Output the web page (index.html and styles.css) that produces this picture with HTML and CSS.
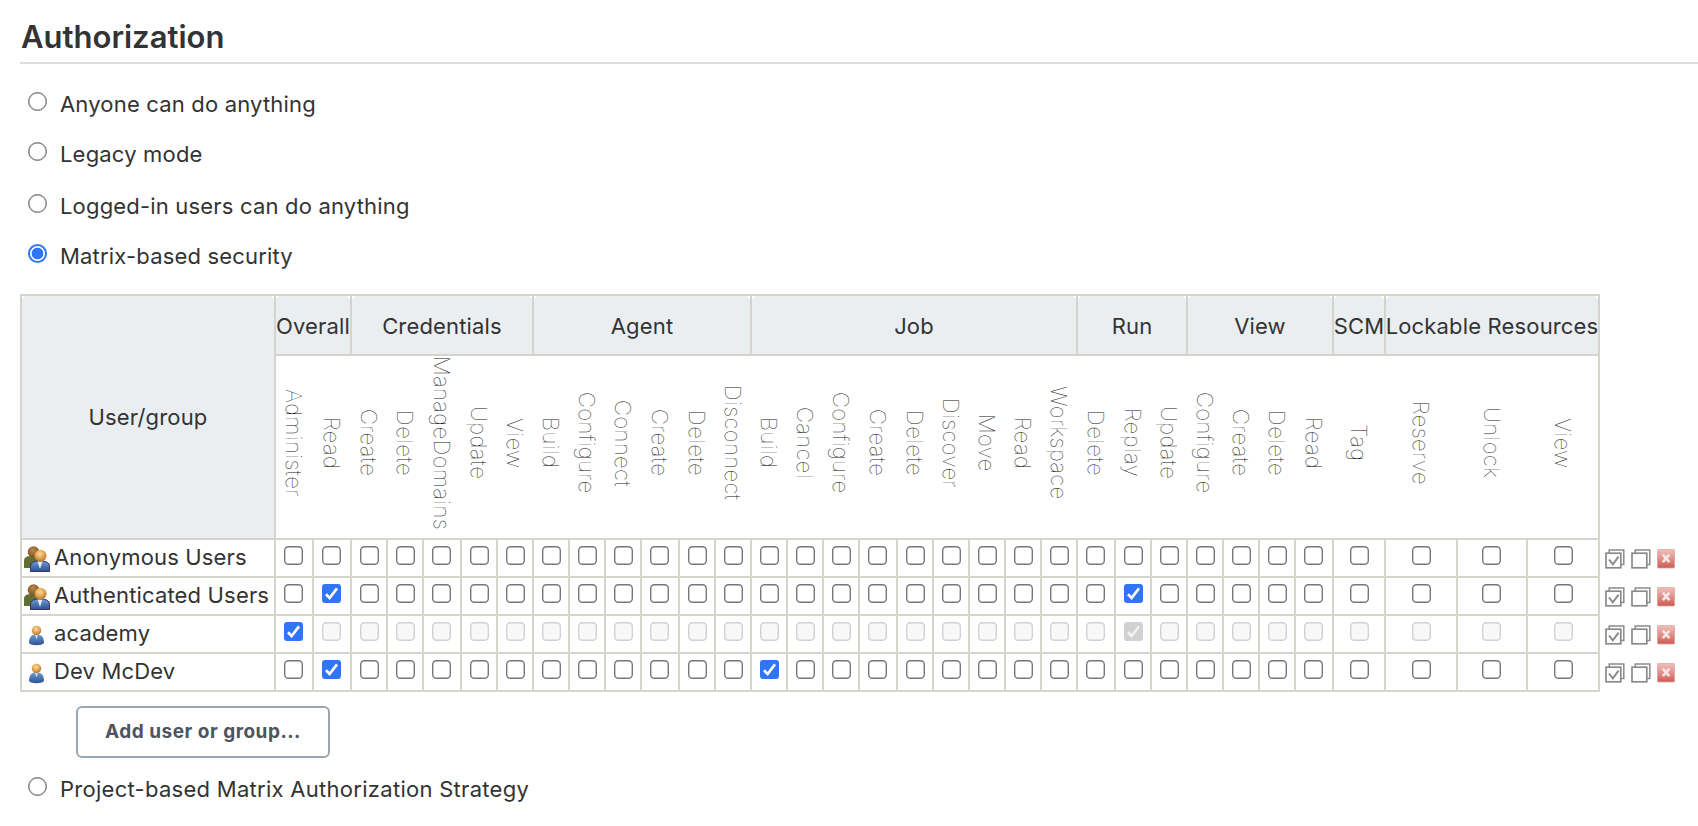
FILE: index.html
```html
<!DOCTYPE html>
<html lang="en">
<head>
<meta charset="utf-8">
<title>Authorization</title>
<link rel="stylesheet" href="styles.css">
</head>
<body>
<svg class="defs" aria-hidden="true">
  <defs>
    <linearGradient id="red" x1="0" y1="0" x2="0" y2="1"><stop offset="0" stop-color="#efc0bc"/><stop offset=".5" stop-color="#e0908b"/><stop offset="1" stop-color="#cf5a52"/></linearGradient>
    <radialGradient id="skin" cx=".45" cy=".35" r=".6"><stop offset="0" stop-color="#fbd9a0"/><stop offset=".55" stop-color="#e5ab55"/><stop offset="1" stop-color="#bd7a35"/></radialGradient>
    <radialGradient id="brown" cx=".45" cy=".35" r=".6"><stop offset="0" stop-color="#b98a4c"/><stop offset="1" stop-color="#7e5222"/></radialGradient>
    <linearGradient id="blue" x1="0" y1="0" x2="0" y2="1"><stop offset="0" stop-color="#6f9ad2"/><stop offset="1" stop-color="#2d5192"/></linearGradient>
    <symbol id="off" viewBox="0 0 19 19"><rect x=".7" y=".7" width="17.6" height="17.6" rx="3.8" fill="#fff" stroke="#767676" stroke-width="1.4"/></symbol>
    <symbol id="on" viewBox="0 0 19 19"><rect width="19" height="19" rx="3" fill="#2f75f6"/><path d="M4 10.2l3.600 3.800L15 4.400" fill="none" stroke="#fff" stroke-width="2.700"/></symbol>
    <symbol id="dis" viewBox="0 0 19 19"><rect x=".7" y=".7" width="17.6" height="17.6" rx="3.8" fill="#f8f8f8" stroke="#d1d1d1" stroke-width="1.4"/></symbol>
    <symbol id="dison" viewBox="0 0 19 19"><rect width="19" height="19" rx="3" fill="#d1d1d1"/><path d="M4 10.2l3.600 3.800L15 4.400" fill="none" stroke="#f2f2f2" stroke-width="2.700"/></symbol>
    <symbol id="all" viewBox="0 0 20 20"><path d="M4.200 4V1h14.600v14.600H16" fill="none" stroke="#8b8b8b" stroke-width="1.5"/><rect x="1" y="4.200" width="14.800" height="14.600" fill="#fff" stroke="#8b8b8b" stroke-width="1.700"/><path d="M4 10.500l3.800 4.800L13.600 7.600" fill="none" stroke="#8b8b8b" stroke-width="2"/></symbol>
    <symbol id="none" viewBox="0 0 20 20"><path d="M4.200 4V1h14.600v14.600H16" fill="none" stroke="#8b8b8b" stroke-width="1.5"/><rect x="1" y="4.200" width="14.800" height="14.600" fill="#fff" stroke="#8b8b8b" stroke-width="1.700"/></symbol>
    <symbol id="del" viewBox="0 0 18 20"><rect x=".4" y=".4" width="17.200" height="18.600" rx="1.200" fill="url(#red)" stroke="#e3a09b" stroke-width=".8"/><path d="M5.800 5.600l6.600 7.600M12.400 5.600l-6.600 7.600" stroke="#f3e6e5" stroke-width="2.700"/></symbol>
    <symbol id="person" viewBox="0 0 26 26"><path d="M5 21c0-6 2.500-8.500 7.500-8.500S20 15 20 21c-2 3-13 3-15 0z" fill="url(#blue)"/><path d="M11 12.500h3l-1.500 5z" fill="#dbe7f6"/><circle cx="12.500" cy="8.500" r="4.700" fill="url(#skin)"/></symbol>
    <symbol id="group" viewBox="0 0 26 26"><path d="M0 22v-7c0-4 3-5 8-5s7 3 7 6v6z" fill="#5f6e31"/><circle cx="9.500" cy="6" r="5.800" fill="url(#brown)"/><path d="M6.500 25.500v-5c0-4 3-5.500 9.500-5.500s9.500 1.500 9.500 5.500v5z" fill="url(#blue)" stroke="#3b2f66"/><path d="M13.500 15.500h5L16 23z" fill="#e2ebf7"/><circle cx="16.500" cy="9.700" r="6" fill="url(#skin)"/></symbol>
  </defs>
</svg>
<main class="page">
  <h1 class="title">Authorization</h1>
  <div class="options">
    <label class="option"><span class="radio"></span><span>Anyone can do anything</span></label>
    <label class="option"><span class="radio"></span><span>Legacy mode</span></label>
    <label class="option third"><span class="radio"></span><span>Logged-in users can do anything</span></label>
    <label class="option"><span class="radio checked"></span><span>Matrix-based security</span></label>
  </div>
  <div class="matrix-wrap">
    <div class="matrix" id="matrix"></div>
    <div class="actions" id="actions"></div>
  </div>
  <button class="add" type="button">Add user or group...</button>
  <label class="option last"><span class="radio"></span><span>Project-based Matrix Authorization Strategy</span></label>
</main>
<script src="app.js"></script>
</body>
</html>
```
FILE: styles.css
```css
* { box-sizing: border-box; }
body { margin: 0; background: #fff; color: #333; font-family: Inter, "Liberation Sans", sans-serif; font-size: 22px; letter-spacing: 0.18px; }
svg { display: block; flex: none; }
.defs { position: absolute; width: 0; height: 0; }
.page { padding: 0 0 0 20px; height: 826px; overflow: hidden; }
.title { margin: 0; height: 64px; padding: 17px 0 0 1px; border-bottom: 2px solid #dedede; font-size: 31px; line-height: 40px; font-weight: 600; letter-spacing: 0; }
.options { padding-top: 15px; height: 230px; }
.option { display: flex; height: 50px; align-items: center; padding-left: 8px; white-space: nowrap; }
.third { margin-top: 2px; }
.radio { width: 19px; height: 19px; margin: 0 13px 5px 0; border: 1px solid #767676; box-shadow: inset 0 0 0 0.5px #767676; border-radius: 50%; flex: none; }
.radio.checked { border: 2px solid #2f75f6; box-shadow: none; background: radial-gradient(circle, #2f75f6 5.5px, #fff 6.2px); }
.matrix-wrap { display: flex; height: 398px; }
.matrix { display: grid; gap: 2px; padding: 2px; background: #d5d5ce; width: 1580px; height: 398px; flex: none; letter-spacing: 0.16px;
  grid-template-rows: 58px 182px repeat(4, 36px); }
.head { display: flex; background: #fff; min-width: 0; }
.head span { flex: 1; min-width: 0; display: flex; align-items: center; justify-content: center; white-space: nowrap; background: #eaeef1; border-radius: 5px 5px 0 0; padding-top: 2px; }
.corner { grid-row: 1 / 3; grid-column: 1; }
.corner span { padding: 0 0 1px; }
.perms { grid-column: 2 / -1; grid-row: 2; display: grid; grid-template-columns: subgrid; background: #fff; }
.perm { display: flex; justify-content: center; align-items: center; writing-mode: vertical-rl; font-weight: 100; letter-spacing: 0.42px; white-space: nowrap; color: #111; padding-bottom: 8px; }
.user { display: flex; background: #fff; white-space: nowrap; padding: 6px 0 0 2px; }
.user span { margin: -3px 0 0 4px; line-height: 28px; }
.cell { background: #fff; display: flex; justify-content: center; padding: 6px 1px 0 0; }
.cell.shift { padding: 6px 0 0 1px; }
.actions { padding: 255px 0 0 5px; }
.action-row { display: flex; gap: 6px; height: 38px; }
.add { display: block; margin: 14px 0 0 56px; width: 254px; height: 52px; border: 2px solid #9aa7b0; border-radius: 6px; background: #fff; color: #4d545d; font: 700 19px Inter, "Liberation Sans", sans-serif; letter-spacing: 0.5px; padding: 0 0 2px; }
.last { margin-top: 6px; letter-spacing: 0.28px; }
```
FILE: app.js
```js
const groups = [
  ["Overall", ["Administer", "Read"]],
  ["Credentials", ["Create", "Delete", "ManageDomains", "Update", "View"]],
  ["Agent", ["Build", "Configure", "Connect", "Create", "Delete", "Disconnect"]],
  ["Job", ["Build", "Cancel", "Configure", "Create", "Delete", "Discover", "Move", "Read", "Workspace"]],
  ["Run", ["Delete", "Replay", "Update"]],
  ["View", ["Configure", "Create", "Delete", "Read"]],
  ["SCM", ["Tag"]],
  ["Lockable Resources", ["Reserve", "Unlock", "View"]]
];
const widths = [252, 36, 36, 34, 34, 36, 34, 34, 34, 34, 34, 36, 34, 34, 34, 34, 34, 36, 34, 34, 34, 34, 34, 36, 34, 34, 34, 34, 34, 36, 50, 70, 68, 70];
const users = [
  { name: "Anonymous Users", icon: "group", on: [] },
  { name: "Authenticated Users", icon: "group", on: [1, 23] },
  { name: "academy", icon: "person", on: [0, 23], locked: true },
  { name: "Dev McDev", icon: "person", on: [1, 13] }
];
const icon = (id, w, h) => `<svg width="${w}" height="${h}"><use href="#${id}"/></svg>`;
const matrix = document.getElementById("matrix");
matrix.style.gridTemplateColumns = widths.map(w => w + "px").join(" ");
let html = `<div class="head corner"><span>User/group</span></div>`;
for (const [name, perms] of groups) {
  html += `<div class="head" style="grid-column: span ${perms.length}"><span>${name}</span></div>`;
}
html += `<div class="perms">` + groups.flatMap(g => g[1]).map(p => `<div class="perm">${p}</div>`).join("") + `</div>`;
for (const u of users) {
  html += `<div class="user">${icon(u.icon, 26, 26)}<span>${u.name}</span></div>`;
  for (let i = 0; i < 33; i++) {
    const on = u.on.includes(i);
    const locked = u.locked && i > 0;
    const id = locked ? (on ? "dison" : "dis") : (on ? "on" : "off");
    const shift = [34, 50, 70].includes(widths[i + 1]) ? " shift" : "";
    html += `<div class="cell${shift}">${icon(id, 19, 19)}</div>`;
  }
}
matrix.innerHTML = html;
document.getElementById("actions").innerHTML = users.map(() =>
  `<div class="action-row">${icon("all", 20, 20)}${icon("none", 20, 20)}${icon("del", 18, 20)}</div>`).join("");
```
